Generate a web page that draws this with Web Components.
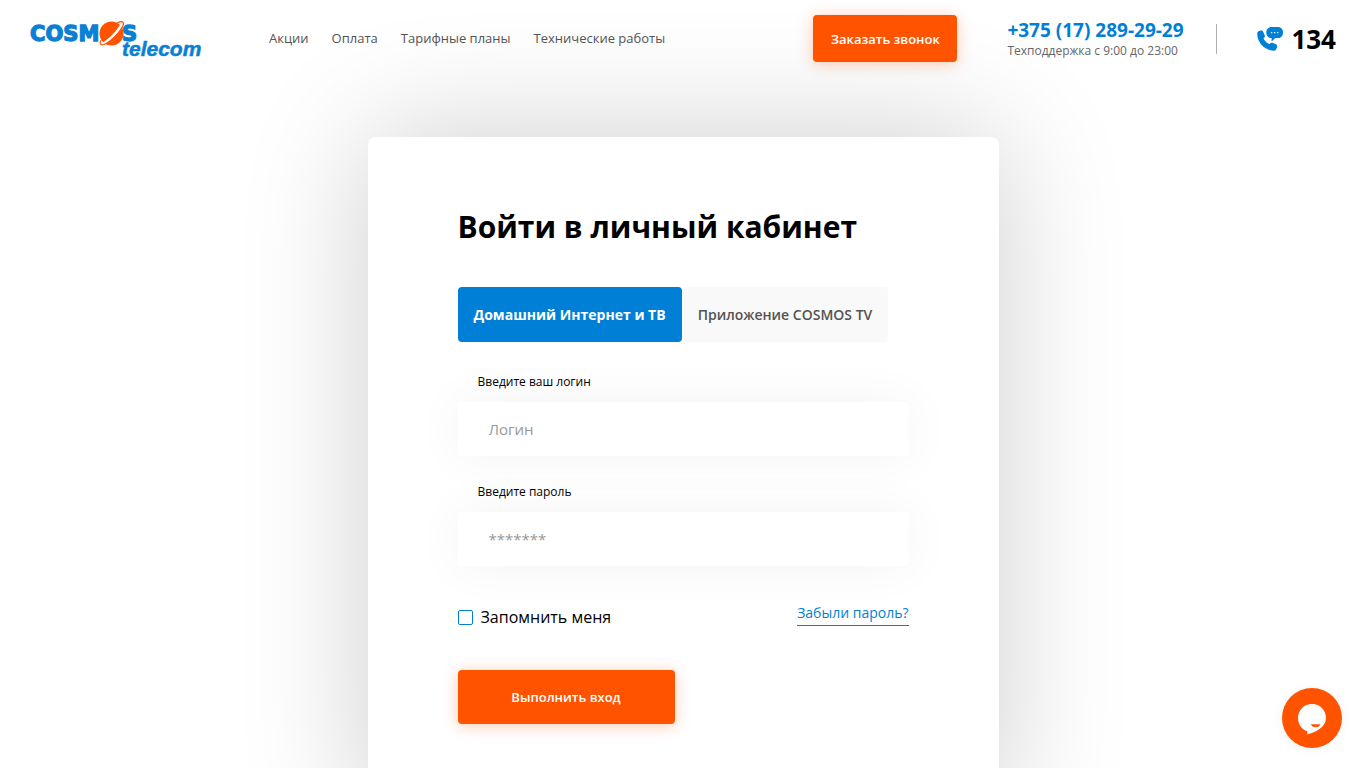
<!DOCTYPE html>
<html lang="ru">
<head>
  <meta charset="UTF-8">
  <meta name="viewport" content="width=device-width, initial-scale=1.0">
  <title>Войти в личный кабинет</title>
  <style>
    :root {
      --blue: #007fd7;
      --orange: #ff5300;
    }
    body {
      margin: 0;
      background: #fff;
      color: #000;
      font-family: "Open Sans", "Noto Sans", sans-serif;
    }
    main {
      display: flex;
      justify-content: center;
      padding: 60px 16px;
    }
    site-header {
      position: relative;
      z-index: 1;
    }
  </style>
</head>
<body>
  <site-header>
    <site-logo slot="logo"></site-logo>
    <nav-link slot="nav" href="#sales">Акции</nav-link>
    <nav-link slot="nav" href="#pay">Оплата</nav-link>
    <nav-link slot="nav" href="#tariffs">Тарифные планы</nav-link>
    <nav-link slot="nav" href="#works">Технические работы</nav-link>
    <action-button slot="action" class="call">Заказать звонок</action-button>
    <support-phone slot="phone" href="tel:+375172892929">
      +375 (17) 289-29-29
      <span slot="note">Техподдержка с 9:00 до 23:00</span>
    </support-phone>
    <short-number slot="phone">134</short-number>
  </site-header>

  <main>
    <login-card>
      <span slot="title">Войти в личный кабинет</span>
      <tab-switch slot="tabs">
        <span slot="first">Домашний Интернет и ТВ</span>
        <span slot="second">Приложение COSMOS TV</span>
      </tab-switch>
      <text-field label="Введите ваш логин" placeholder="Логин" type="text"></text-field>
      <text-field label="Введите пароль" placeholder="*******" type="password"></text-field>
      <remember-row slot="options">
        Запомнить меня
        <span slot="forgot">Забыли пароль?</span>
      </remember-row>
      <action-button slot="submit" class="login">Выполнить вход</action-button>
    </login-card>
  </main>

  <chat-button></chat-button>

  <script>
    // Small base class: every element renders its template once
    class BaseElement extends HTMLElement {
      constructor() {
        super();
        this.attachShadow({ mode: 'open' });
      }

      connectedCallback() {
        if (!this.shadowRoot.innerHTML) {
          this.shadowRoot.innerHTML = this.render();
        }
      }
    }

    class SiteHeader extends BaseElement {
      render() {
        return `
          <style>
            :host { display: block; }
            header {
              display: flex;
              align-items: center;
              padding: 15px 30px;
            }
            nav {
              display: flex;
              gap: 23px;
              margin-left: 67px;
            }
            .contacts {
              display: flex;
              align-items: center;
              margin-left: auto;
            }
            .phones {
              display: flex;
              align-items: center;
              margin-left: 50px;
            }
          </style>
          <header>
            <slot name="logo"></slot>
            <nav><slot name="nav"></slot></nav>
            <div class="contacts">
              <slot name="action"></slot>
              <div class="phones"><slot name="phone"></slot></div>
            </div>
          </header>
        `;
      }
    }

    class SiteLogo extends BaseElement {
      render() {
        return `
          <style>
            :host { display: block; flex: none; }
            a, svg { display: block; }
            text { fill: #0a80d4; stroke: #0a80d4; }
            .top { font: bold 21px "DejaVu Sans", sans-serif; stroke-width: 1.3px; }
            .bottom { font: italic bold 21px "Liberation Sans", sans-serif; stroke-width: 0.5px; }
          </style>
          <a href="#home" aria-label="Cosmos telecom">
            <svg width="172" height="45" viewBox="0 -5 172 45">
              <text class="top" x="0" y="20">COSM</text>
              <text class="top" x="92" y="20">S</text>
              <text class="bottom" x="92" y="35">telecom</text>
              <circle cx="81.500" cy="12.500" r="12" fill="#ff5300"/>
              <!-- orbit ring -->
              <path d="M71 23.500C78 21 89 10 92 2.500" fill="none" stroke="#fff" stroke-width="2.600"/>
              <path d="M86 2.500C90 0 94 0 93.500 3C92 10 81 21 74 23.500C70.500 24.500 69 22.500 71 19" fill="none" stroke="#ff5300" stroke-width="1.200"/>
            </svg>
          </a>
        `;
      }
    }

    class NavLink extends BaseElement {
      render() {
        return `
          <style>
            :host { display: block; }
            a {
              display: block;
              color: #535353;
              font-size: 13px;
              line-height: 19px;
              text-decoration: none;
              white-space: nowrap;
            }
            a:hover { color: var(--blue); }
          </style>
          <a href="${this.getAttribute('href')}"><slot></slot></a>
        `;
      }
    }

    class ActionButton extends BaseElement {
      render() {
        return `
          <style>
            :host { display: block; }
            button {
              display: block;
              min-width: 144px;
              height: 47px;
              padding: 0 16px;
              border: 0;
              border-radius: 4px;
              background: var(--orange);
              box-shadow: 0 2px 15px rgba(255, 83, 0, 0.3);
              color: #fff;
              font: 600 13px "Open Sans", "Noto Sans", sans-serif;
              white-space: nowrap;
              cursor: pointer;
            }
            :host(.login) button {
              min-width: 217px;
              height: 54px;
            }
          </style>
          <button type="button"><slot></slot></button>
        `;
      }
    }

    class SupportPhone extends BaseElement {
      render() {
        return `
          <style>
            :host {
              display: flex;
              align-items: center;
              white-space: nowrap;
            }
            .text { min-width: 179px; padding-right: 30px; }
            a {
              display: block;
              color: var(--blue);
              font-size: 19px;
              font-weight: 700;
              line-height: 24px;
              text-decoration: none;
            }
            .note {
              color: #666;
              font-size: 12px;
              line-height: 18px;
            }
            .line {
              width: 1px;
              height: 30px;
              background: #b0b0b0;
            }
          </style>
          <div class="text">
            <a href="${this.getAttribute('href')}"><slot></slot></a>
            <div class="note"><slot name="note"></slot></div>
          </div>
          <div class="line"></div>
        `;
      }
    }

    class ShortNumber extends BaseElement {
      render() {
        return `
          <style>
            :host { display: block; margin-left: 40px; }
            a {
              display: flex;
              align-items: center;
              gap: 8px;
              color: #000;
              font-size: 26px;
              font-weight: 700;
              line-height: 36px;
              text-decoration: none;
            }
          </style>
          <a href="tel:134">
            <svg width="26" height="24" viewBox="0 0 26 24">
              <path d="M0.200 7C0 5 1.500 4.200 3.500 3.600C5.200 3.200 5.800 3.800 6.300 5L7.800 8.400C8.200 9.600 7.800 10.200 6.500 11.400C7.600 13.800 9.800 16 12.500 17.100C13.800 15.700 14.400 15.400 15.500 15.800L19 17.300C20 17.800 20.300 18.600 20 20C19.500 22.500 18.500 23.800 16.500 23.700C7.500 23 0.500 16 0.200 7Z" fill="#007fd7"/>
              <path d="M14.500 0H21C24 0 26 2.300 26 5.400C26 8.800 24 11 21 11H18.300L14.600 14.600V11C11.500 11 9.300 8.800 9.300 5.400C9.300 2.300 11.500 0 14.500 0Z" fill="#007fd7"/>
              <path d="M14 5h1.300v1.300H14zM17 5h1.300v1.300H17zM20 5h1.300v1.300H20z" fill="#fff"/>
            </svg>
            <span><slot></slot></span>
          </a>
        `;
      }
    }

    class LoginCard extends BaseElement {
      render() {
        return `
          <style>
            :host {
              display: block;
              box-sizing: border-box;
              width: 100%;
              max-width: 631px;
              padding: 70px 90px 90px;
              border-radius: 8px;
              background: #fff;
              box-shadow: 0 0 128px rgba(0, 0, 0, 0.2);
            }
            h1 {
              margin: 0 0 40px;
              font-size: 30px;
              font-weight: 700;
              line-height: 40px;
            }
            .fields {
              display: grid;
              gap: 26px;
              margin: 30px 0 37px;
            }
            .submit { display: flex; margin-top: 39px; }
          </style>
          <h1><slot name="title"></slot></h1>
          <slot name="tabs"></slot>
          <form>
            <div class="fields"><slot></slot></div>
            <slot name="options"></slot>
            <div class="submit"><slot name="submit"></slot></div>
          </form>
        `;
      }
    }

    class TabSwitch extends BaseElement {
      connectedCallback() {
        super.connectedCallback();
        const buttons = this.shadowRoot.querySelectorAll('button');
        buttons.forEach(button => {
          button.addEventListener('click', () => {
            buttons.forEach(item => item.setAttribute('aria-selected', item === button));
          });
        });
      }

      render() {
        return `
          <style>
            :host { display: block; }
            div { display: flex; }
            button {
              height: 55px;
              padding: 0 16px;
              border: 0;
              border-radius: 4px;
              background: #f9f9f9;
              color: #535353;
              font: 600 14px "Open Sans", "Noto Sans", sans-serif;
              white-space: nowrap;
              cursor: pointer;
            }
            button[aria-selected="true"] {
              background: var(--blue);
              color: #fff;
              font-weight: 700;
            }
          </style>
          <div role="tablist">
            <button type="button" role="tab" aria-selected="true"><slot name="first"></slot></button>
            <button type="button" role="tab" aria-selected="false"><slot name="second"></slot></button>
          </div>
        `;
      }
    }

    class TextField extends BaseElement {
      render() {
        return `
          <style>
            :host { display: block; }
            label {
              display: block;
              position: relative;
              z-index: 1;
              margin-bottom: 10px;
              padding-left: 20px;
              font-size: 12px;
              line-height: 20px;
            }
            input {
              display: block;
              box-sizing: border-box;
              width: 100%;
              height: 54px;
              padding: 0 31px;
              border: 0;
              border-radius: 4px;
              outline: 0;
              background: #fff;
              box-shadow: 0 0 50px rgba(0, 0, 0, 0.05);
              color: #000;
              font: 15px "Open Sans", "Noto Sans", sans-serif;
            }
            input::placeholder { color: #999; }
          </style>
          <label for="field">${this.getAttribute('label')}</label>
          <input id="field" type="${this.getAttribute('type')}" placeholder="${this.getAttribute('placeholder')}">
        `;
      }
    }

    class RememberRow extends BaseElement {
      render() {
        return `
          <style>
            :host {
              display: flex;
              justify-content: space-between;
              align-items: flex-start;
            }
            label {
              display: flex;
              align-items: center;
              gap: 8px;
              font-size: 16px;
              line-height: 28px;
            }
            input {
              appearance: none;
              width: 15px;
              height: 15px;
              margin: 0;
              border: 1px solid var(--blue);
              border-radius: 2px;
            }
            input:checked { background: var(--blue); }
            a {
              padding-bottom: 2px;
              border-bottom: 1px solid var(--blue);
              color: var(--blue);
              font-size: 14px;
              line-height: 20px;
              text-decoration: none;
            }
          </style>
          <label for="remember"><input id="remember" type="checkbox"><span><slot></slot></span></label>
          <a href="#forgot"><slot name="forgot"></slot></a>
        `;
      }
    }

    class ChatButton extends BaseElement {
      render() {
        return `
          <style>
            /* stays in the window's corner, over the page */
            :host {
              position: fixed;
              right: 24px;
              bottom: 20px;
              z-index: 2;
            }
            button {
              display: block;
              width: 60px;
              height: 60px;
              padding: 0;
              border: 0;
              border-radius: 50%;
              background: var(--orange);
              box-shadow: 0 1px 12px rgba(0, 0, 0, 0.06);
              cursor: pointer;
            }
            svg { display: block; }
          </style>
          <button type="button" aria-label="Чат">
            <svg width="60" height="60" viewBox="0 0 60 60">
              <path d="M30 16C38 16 44 22.200 44 30C44 37 38 43 25.300 46.500V43.300C20 41.500 16 36.500 16 30C16 22.200 22 16 30 16Z" fill="#fff"/>
              <path d="M29 36.200H38.300C38 38 36 39.200 33.700 39.200C31.300 39.200 29.300 38 29 36.200Z" fill="#ff5300"/>
            </svg>
          </button>
        `;
      }
    }

    customElements.define('site-header', SiteHeader);
    customElements.define('site-logo', SiteLogo);
    customElements.define('nav-link', NavLink);
    customElements.define('action-button', ActionButton);
    customElements.define('support-phone', SupportPhone);
    customElements.define('short-number', ShortNumber);
    customElements.define('login-card', LoginCard);
    customElements.define('tab-switch', TabSwitch);
    customElements.define('text-field', TextField);
    customElements.define('remember-row', RememberRow);
    customElements.define('chat-button', ChatButton);
  </script>
</body>
</html>
